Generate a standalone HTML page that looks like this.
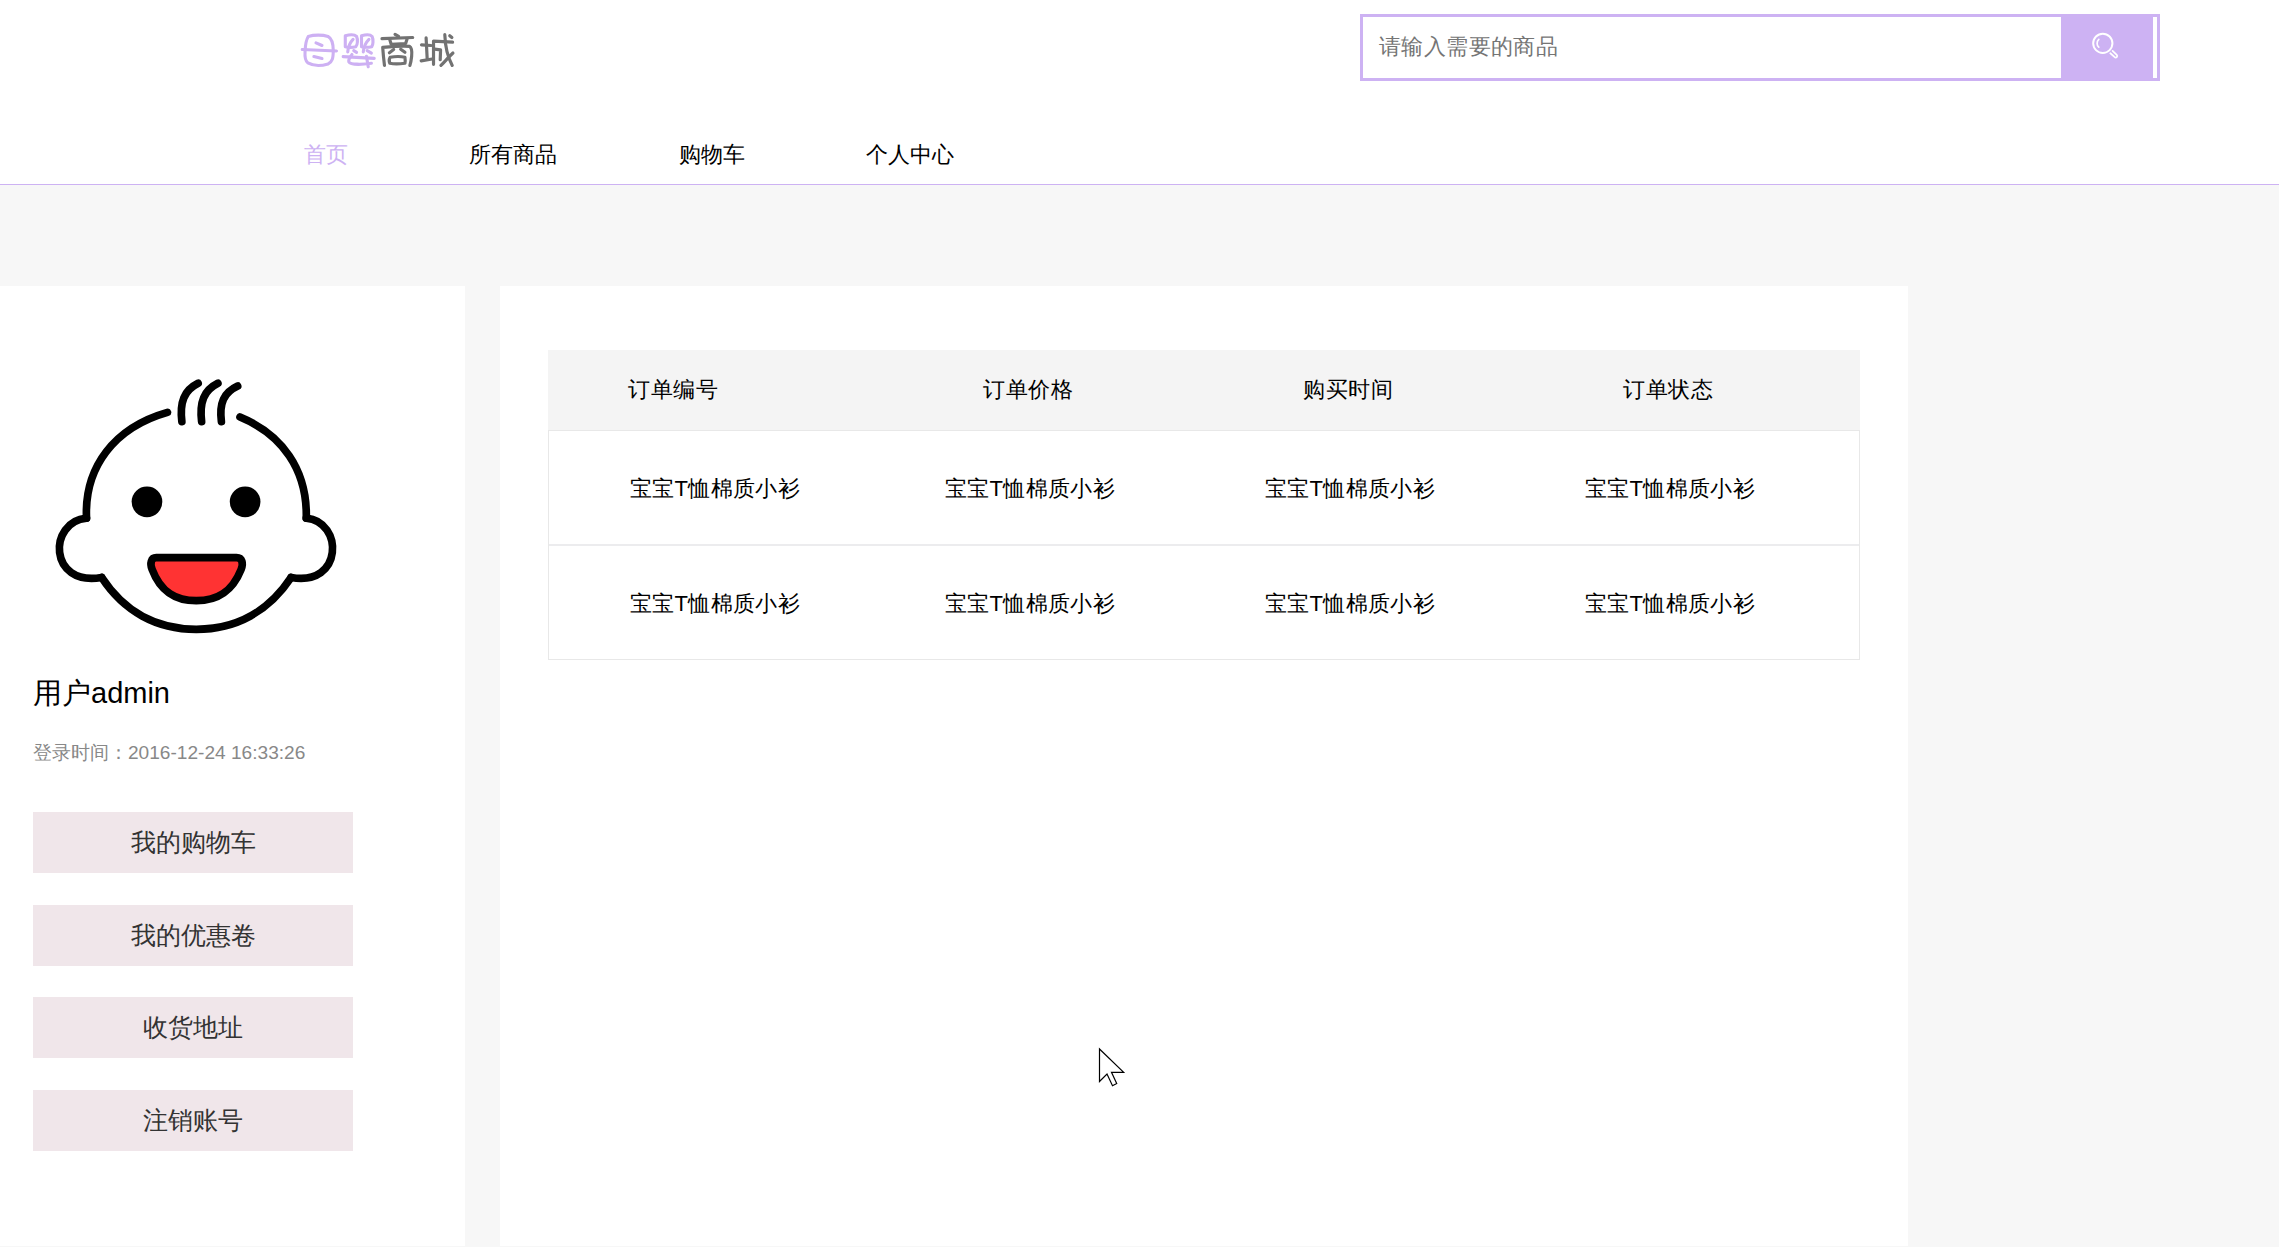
<!DOCTYPE html>
<html>
<head>
<meta charset="utf-8">
<style>
*{margin:0;padding:0;box-sizing:border-box;}
html,body{width:2279px;height:1247px;overflow:hidden;background:#f7f7f7;font-family:"Liberation Sans",sans-serif;}
.abs{position:absolute;}
#header{position:absolute;left:0;top:0;width:2279px;height:185px;background:#fff;border-bottom:1px solid #cdb2f3;}
.nav{position:absolute;top:140px;font-size:22px;line-height:30px;color:#000;white-space:nowrap;}
#search{position:absolute;left:1360px;top:14px;width:800px;height:67px;border:3px solid #cdb2f3;background:#fff;}
#search .ph{position:absolute;left:16px;top:16px;font-size:22px;line-height:28px;color:#757575;white-space:nowrap;letter-spacing:0.4px;}
#search .btn{position:absolute;left:698px;top:0;width:92px;height:61px;background:#cdb2f3;}
#left{position:absolute;left:0;top:286px;width:465px;height:960px;background:#fff;}
#main{position:absolute;left:500px;top:286px;width:1408px;height:960px;background:#fff;}
.t{position:absolute;white-space:nowrap;font-size:22px;line-height:28px;color:#000;}
.b{position:absolute;left:33px;width:320px;height:61px;background:#f0e6ea;color:#333;font-size:25.3px;text-align:center;line-height:61px;white-space:nowrap;}
</style>
</head>
<body>
<div id="header">
<svg class="abs" style="left:298px;top:28px;" width="80" height="44" viewBox="0 0 2267 1247">
  <g fill="none" stroke="#cdb0f3" stroke-width="88" stroke-linecap="round" stroke-linejoin="round">
    <path d="M290 240 C 450 190 700 190 850 240 C 960 300 1000 500 1000 650 C 995 850 980 960 850 1020 C 650 1080 420 1070 280 990 C 190 930 190 800 200 650 C 210 450 240 320 290 240 Z"/>
    <path d="M120 610 L 1090 650"/>
    <path d="M510 420 L 680 495"/>
    <path d="M450 810 L 680 865"/>
    <path d="M1340 220 C 1450 190 1600 180 1660 240 C 1700 320 1690 480 1640 530 C 1550 550 1420 550 1340 530 Z"/>
    <path d="M1560 320 C 1460 420 1420 560 1410 680"/>
    <path d="M1580 640 L 1660 690"/>
    <path d="M1800 220 C 1900 190 2050 180 2100 240 C 2140 330 2130 480 2090 530 C 2000 550 1880 550 1800 530 Z"/>
    <path d="M2010 320 C 1900 430 1860 560 1850 680"/>
    <path d="M1960 640 L 2080 710"/>
    <path d="M1280 810 L 2160 860"/>
    <path d="M1530 750 C 1500 800 1420 880 1440 960 C 1480 1040 1800 1040 2080 1000"/>
    <path d="M1940 800 L 1990 1100"/>
  </g>
</svg>
<svg class="abs" style="left:376px;top:28px;" width="80" height="44" viewBox="0 0 2267 1247">
  <g fill="none" stroke="#727272" stroke-width="90" stroke-linecap="round" stroke-linejoin="round">
    <path d="M540 180 L 640 240"/>
    <path d="M170 300 L 1040 270"/>
    <path d="M390 330 L 430 460 L 840 440 L 880 310"/>
    <path d="M240 1060 C 220 900 200 700 190 550 C 500 520 800 500 950 520 C 1020 560 1020 700 1010 800 C 1000 900 980 1000 960 1060"/>
    <path d="M380 700 L 500 610"/>
    <path d="M700 600 L 820 690"/>
    <path d="M400 830 C 550 800 700 800 820 830 C 830 900 830 960 820 1000 C 650 1020 500 1020 390 1000 C 370 950 370 880 400 830 Z"/>
    <path d="M1420 280 L 1450 860"/>
    <path d="M1290 480 L 1560 495"/>
    <path d="M1280 930 L 1590 880"/>
    <path d="M1630 1030 L 1630 370 L 2170 400"/>
    <path d="M1950 190 C 1960 500 2020 800 2160 1060"/>
    <path d="M2090 220 L 2150 270"/>
    <path d="M1660 600 L 1830 620 L 1820 900"/>
    <path d="M2180 710 C 2080 800 1950 950 1840 1060"/>
  </g>
</svg>

  <div class="nav" style="left:304px;color:#cdb2f3;">首页</div>
  <div class="nav" style="left:469px;">所有商品</div>
  <div class="nav" style="left:679px;">购物车</div>
  <div class="nav" style="left:866px;">个人中心</div>
  <div id="search">
    <div class="ph">请输入需要的商品</div>
    <div class="btn"></div>
  </div>
</div>

<div id="left">
  <div class="t" style="left:33px;top:389px;font-size:29px;line-height:36px;">用户admin</div>
  <div class="t" style="left:33px;top:455px;font-size:19.1px;line-height:24px;color:#888;">登录时间：2016-12-24 16:33:26</div>
</div>
<div class="b" style="top:812px;">我的购物车</div>
<div class="b" style="top:905px;">我的优惠卷</div>
<div class="b" style="top:997px;">收货地址</div>
<div class="b" style="top:1090px;">注销账号</div>

<svg class="abs" style="left:40px;top:360px;" width="310" height="290" viewBox="0 0 1333 1247">
  <g fill="none" stroke="#000" stroke-width="33" stroke-linecap="round" stroke-linejoin="round">
    <path d="M548 225 C 320 290 190 460 200 680"/>
    <path d="M200 680 C 35 695 35 975 265 935"/>
    <path d="M265 935 C 360 1080 500 1158 672 1158 C 844 1158 984 1080 1080 935"/>
    <path d="M1080 935 C 1305 975 1305 695 1145 680"/>
    <path d="M1145 680 C 1150 470 1040 320 860 245"/>
    <path d="M610 265 C 600 180 620 130 680 100"/>
    <path d="M695 265 C 685 180 705 130 765 100"/>
    <path d="M780 265 C 770 185 790 140 850 112"/>
  </g>
  <circle cx="460" cy="610" r="66" fill="#000"/>
  <circle cx="882" cy="610" r="66" fill="#000"/>
  <path d="M500 850 L 845 850 C 870 850 875 875 865 900 C 825 1000 760 1035 672 1035 C 585 1035 520 1000 482 900 C 472 875 477 850 500 850 Z" fill="#ff3333" stroke="#000" stroke-width="33" stroke-linejoin="round"/>
</svg>
<div id="main"></div>
<div class="abs" style="left:548px;top:350px;width:1312px;height:80px;background:#f4f4f4;"></div>
<div class="abs" style="left:548px;top:430px;width:1312px;height:230px;border:1px solid #e8e8e8;"></div>
<div class="abs" style="left:549px;top:544px;width:1310px;height:2px;background:#ececee;"></div>

<div class="t" style="left:628px;top:376px;letter-spacing:0.5px;">订单编号</div>
<div class="t" style="left:983px;top:376px;letter-spacing:0.5px;">订单价格</div>
<div class="t" style="left:1303px;top:376px;letter-spacing:0.5px;">购买时间</div>
<div class="t" style="left:1623px;top:376px;letter-spacing:0.5px;">订单状态</div>

<div class="t" style="left:630px;top:475px;letter-spacing:0.3px;">宝宝T恤棉质小衫</div>
<div class="t" style="left:945px;top:475px;letter-spacing:0.3px;">宝宝T恤棉质小衫</div>
<div class="t" style="left:1265px;top:475px;letter-spacing:0.3px;">宝宝T恤棉质小衫</div>
<div class="t" style="left:1585px;top:475px;letter-spacing:0.3px;">宝宝T恤棉质小衫</div>
<div class="t" style="left:630px;top:590px;letter-spacing:0.3px;">宝宝T恤棉质小衫</div>
<div class="t" style="left:945px;top:590px;letter-spacing:0.3px;">宝宝T恤棉质小衫</div>
<div class="t" style="left:1265px;top:590px;letter-spacing:0.3px;">宝宝T恤棉质小衫</div>
<div class="t" style="left:1585px;top:590px;letter-spacing:0.3px;">宝宝T恤棉质小衫</div>

<svg class="abs" style="left:2085px;top:25px;" width="40" height="40" viewBox="0 0 1247 1247">
  <g fill="none" stroke="#fff" stroke-linecap="round">
    <circle cx="555" cy="570" r="300" stroke-width="62"/>
    <path d="M430 450 C 360 520 360 630 430 690" stroke-width="52"/>
    <path d="M790 880 L 925 1000 A 45 45 0 0 0 990 935 L 860 810" stroke-width="55"/>
  </g>
</svg>
<svg class="abs" style="left:1090px;top:1040px;" width="45" height="55" viewBox="0 0 45 55">
  <path d="M9.5 9 L 9.5 41.5 L 17 34 L 22.5 45.7 L 26.7 43.5 L 21.5 32.3 L 33.7 32.3 Z" fill="#fff" stroke="#000" stroke-width="1.2" stroke-linejoin="miter"/>
</svg>
</body>
</html>
